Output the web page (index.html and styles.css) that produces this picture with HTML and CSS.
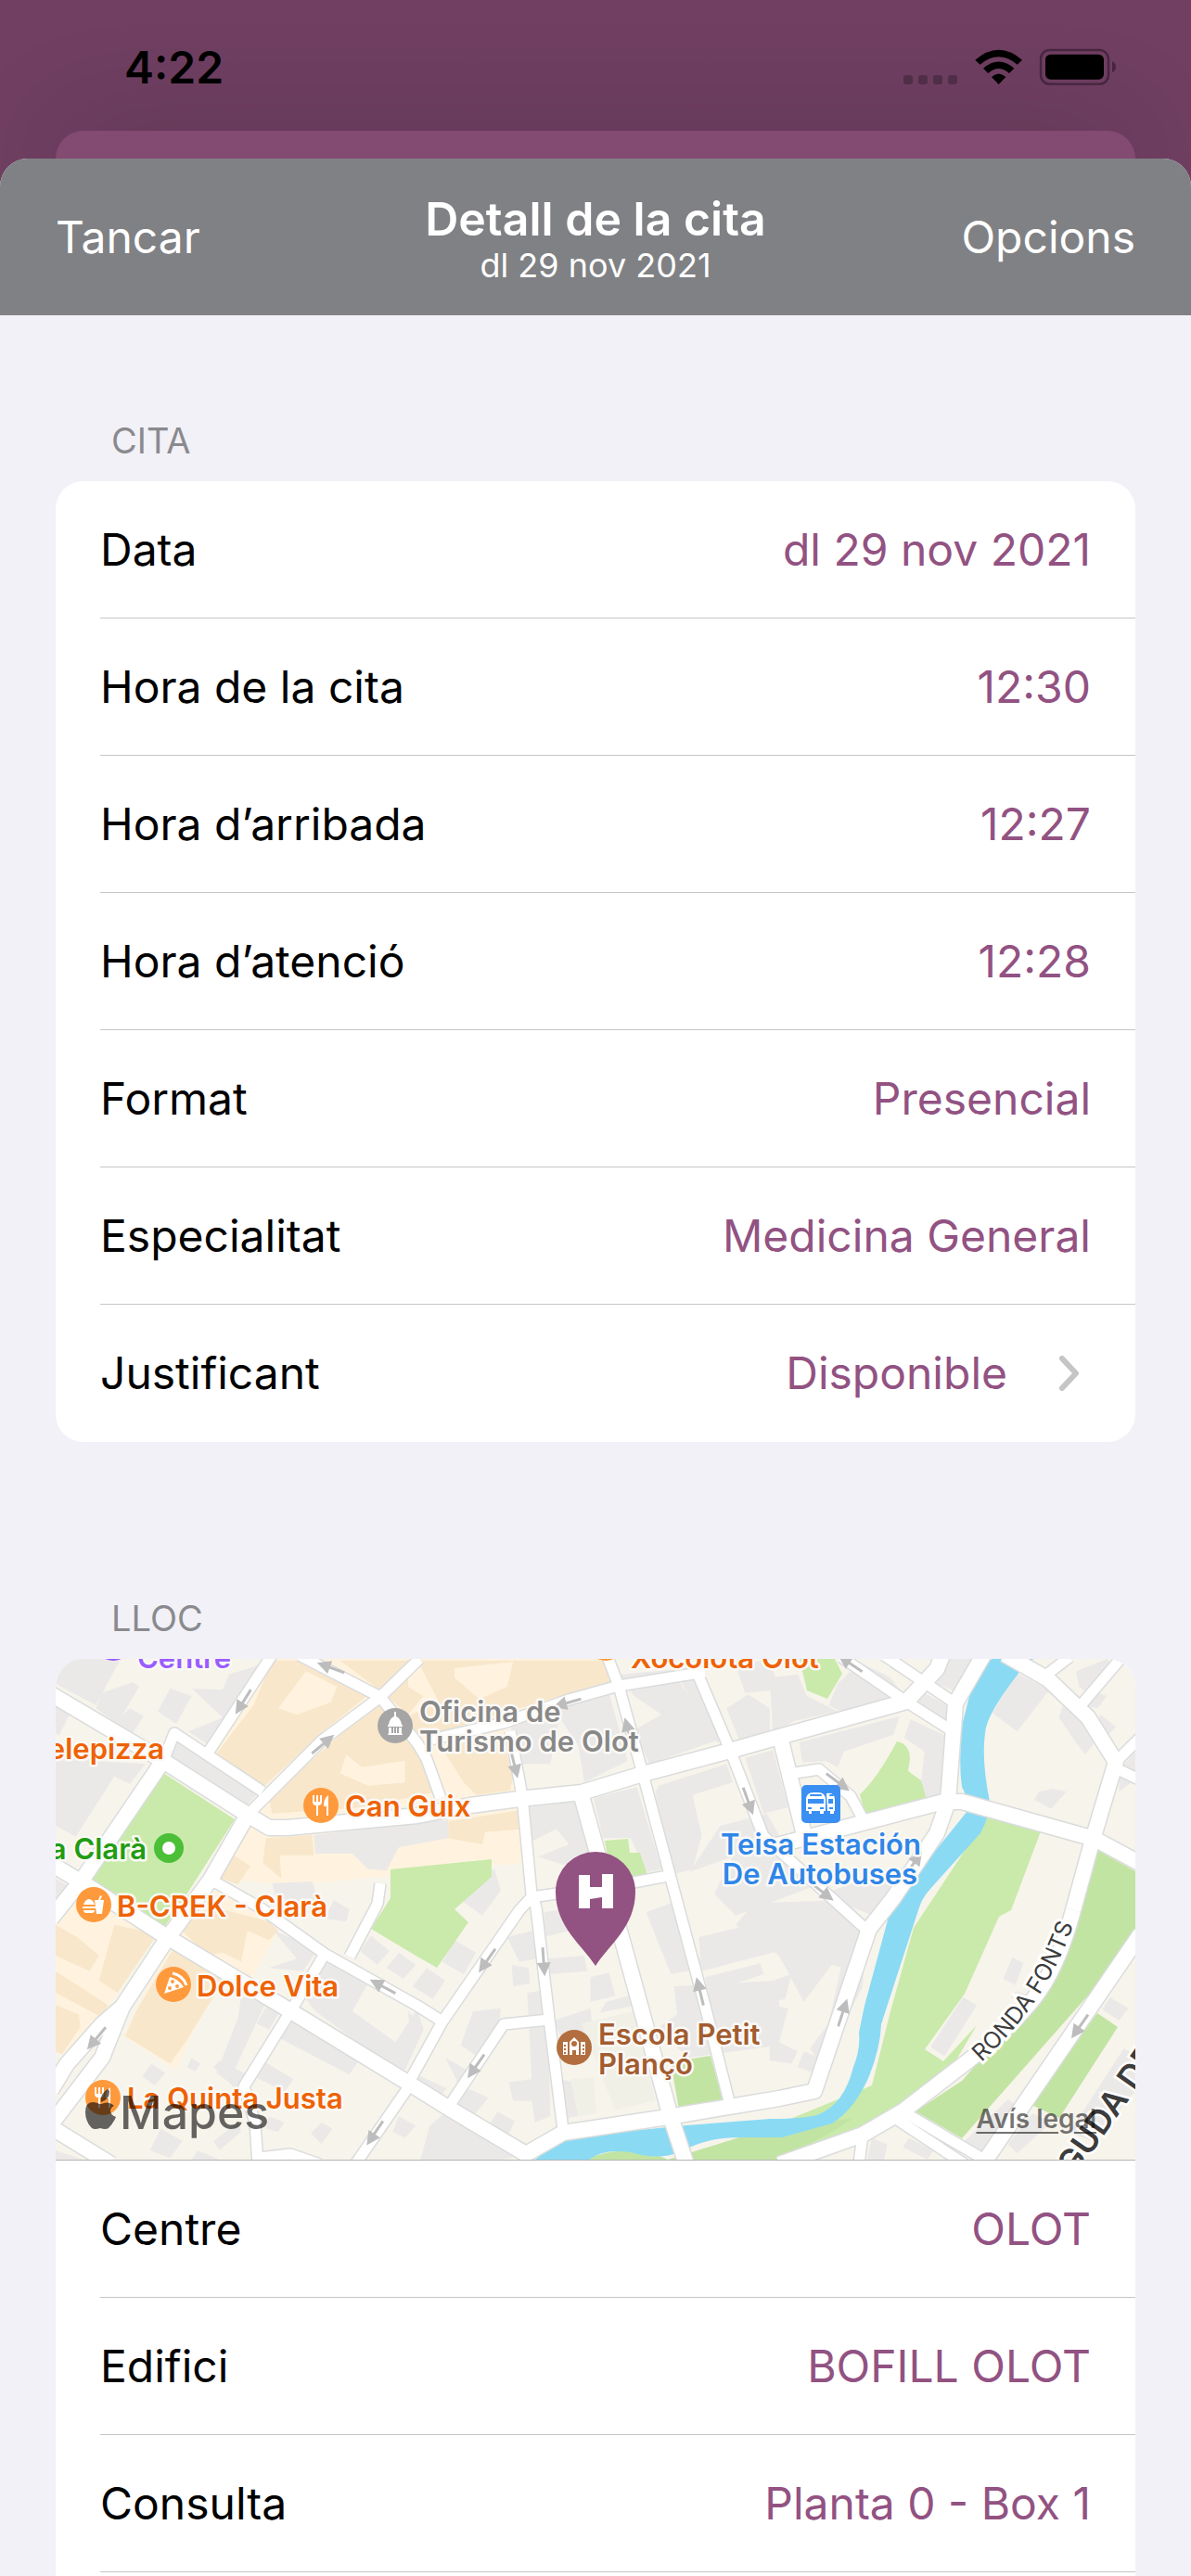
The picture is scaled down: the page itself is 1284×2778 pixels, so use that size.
FILE: index.html
```html
<!DOCTYPE html>
<html lang="ca">
<head>
<meta charset="utf-8">
<meta name="viewport" content="width=device-width, initial-scale=1">
<title>Detall de la cita</title>
<link rel="stylesheet" href="styles.css">
</head>
<body>
<div class="screen">
  <div class="status">
    <span class="clock">4:22</span>
    <svg class="status-icons" width="230" height="42" viewBox="0 0 690 126" aria-hidden="true">
      <g fill="#52304a"><rect x="0" y="90" width="30" height="30" rx="9"/><rect x="48" y="90" width="30" height="30" rx="9"/><rect x="96" y="90" width="30" height="30" rx="9"/><rect x="144" y="90" width="30" height="30" rx="9"/></g>
      <path d="M232 41Q308-25 384 41L368 56Q308 6 248 56ZM258 68Q308 25 358 68L342 84Q308 54 274 84ZM285 96Q308 75 331 96L308 120Z"/>
      <rect x="444" y="9" width="219" height="110" rx="29" fill="none" stroke="#472740" stroke-width="7"/>
      <rect x="459" y="23" width="189" height="81" rx="17"/>
      <path d="M675 45Q687 51 687 63T675 82Z" fill="#472740"/>
    </svg>
  </div>
  <div class="back-card"></div>
  <main class="sheet">
    <header class="bar">
      <button type="button" class="bar-button">Tancar</button>
      <div class="bar-title">
        <h1>Detall de la cita</h1>
        <p>dl 29 nov 2021</p>
      </div>
      <button type="button" class="bar-button bar-button-end">Opcions</button>
    </header>
    <div class="content">
      <section class="group">
        <h2>CITA</h2>
        <dl class="card">
          <div class="row"><dt>Data</dt><dd>dl 29 nov 2021</dd></div>
          <div class="row"><dt>Hora de la cita</dt><dd>12:30</dd></div>
          <div class="row"><dt>Hora d’arribada</dt><dd>12:27</dd></div>
          <div class="row"><dt>Hora d’atenció</dt><dd>12:28</dd></div>
          <div class="row"><dt>Format</dt><dd>Presencial</dd></div>
          <div class="row"><dt>Especialitat</dt><dd>Medicina General</dd></div>
          <div class="row row-last"><dt>Justificant</dt><dd><a class="more" href="#justificant">Disponible<svg width="22" height="38" viewBox="0 0 22 38" aria-hidden="true"><path d="M3 3L18 19L3 35" fill="none" stroke="#c5c5c7" stroke-width="6" stroke-linecap="round" stroke-linejoin="round"/></svg></a></dd></div>
        </dl>
      </section>
      <section class="group">
        <h2>LLOC</h2>
        <div class="card card-place">
          <div class="map">
            <svg class="map-canvas" viewBox="0 0 1164 540" preserveAspectRatio="xMidYMid slice" role="img" aria-label="Mapa d’Olot">
              <defs>
                <g id="roads-l">
                  <path d="M-5 38L113 108L207 168L230 182H250L390 169L447 158L500 151L567 144L633 124L727 99L780 84L917 46L950 11L958-9"/>
                  <path d="M113 114L30 236L-5 280M-5 221L30 242L117 298L247 376L383 459L423 484L507 534L547 511L660 494L780 474L818 466L877 291L903 258L950 188L962 154L970 48L1003-9"/>
                  <path d="M207 168L167 238L120 302L72 375L50 430L-5 502M72 375L50 394L12 437L-5 465M0 508L60 545"/>
                  <path d="M567 148L593 241L613 311L663 494L680 545"/>
                  <path d="M782 88L808 194M770 203L957 154H977L1120 194L1170 221M1023-5L1070 22L1113 63L1143 111L1117 198L1097 271"/>
                  <path d="M1097 271Q1080 335 1053 368T983 434L913 488L870 513L780 545M1170 296L998 547"/>
                </g>
                <g id="roads-s">
                  <path d="M118 105L128 80L223 143M207 168L287 88L350 41L392 0M165 100L233-4M263-4L350 41L390 91L400 108L415 150"/>
                  <path d="M400 88L483 69L553 44L607 29L700 14M595-2L607 29L633 124L667 251L700 374L727 481"/>
                  <path d="M490 78L503 148L513 254L518 268L532 388L547 508M687 4L727 98L763 191L873 291"/>
                  <path d="M797 123L823 119L857 148L872 176M847-2L917 46L967 78M893-4L970 48M1067 18L1093-2M1107 48L1147 1M1143 111L1170 84M1143 118L1170 131"/>
                  <path d="M660 234L623 241L513 257L500 271L417 391L380 458M167 238L220 268L290 318L390 374L417 391M290 318L257 374L203 461L215 500L218 545M317 321L347 264L350 242M383 458L323 545M532 389L483 394L423 484M220 538L253 534L285 545M913 488L1003 541M903 494L980 545M870 513L866 545"/>
                </g>
                <path id="arrow" d="M-14 0H8M4-5L14 0L4 5Z"/>
                <g id="fork"><circle r="19" fill="#ff9a3c"/><path d="M-9-11V-4Q-9 0-5 0V11H-3V0Q1 0 1-4V-11H-1V-4H-3V-11H-5V-4H-7V-11ZM8-11Q3-8 3 1H6V11H8Z" fill="#fff"/></g>
              </defs>
              <rect width="1164" height="540" fill="#f7f4eb"/>

              <g transform="scale(.3333)">
                <!-- old town blocks -->
                <g fill="#fff3df">
                  <path d="M690 0H1790L1800 85L1450 195L1500 440L690 525L650 495L690 430L515 310Z"/>
                  <path d="M620 545L1510 480L1505 660L840 725L800 740L510 705Z"/>
                  <path d="M0 730L330 880L60 1300L0 1270ZM500 720L720 880L620 1060L390 890ZM360 930L520 1060L440 1220L390 1330L220 1220Z"/>
                </g>
                <g fill="#f8e7cb">
                  <path d="M700 5L790 5L1025 105L860 240L665 420L520 305L640 150Z"/>
                  <path d="M920 5H1140V90L1190 120L1140 180L1060 110ZM1170 5H1790L1800 75L1600 130L1400 190L1200 250L1140 240L1150 180L1240 140Z"/>
                  <path d="M690 450L950 220L1050 145L1170 280L1230 430L1000 480L700 500Z"/>
                  <path d="M1250 290L1440 240L1480 380L1470 425L1360 440L1320 400Z"/>
                  <path d="M560 625L630 670L590 730L520 705ZM680 580L830 570L835 635L725 635L730 710L670 660ZM1270 525L1500 490L1515 550L1390 560L1380 600L1270 580Z"/>
                  <path d="M190 860L330 890L200 1080L140 1040ZM0 860L70 900L140 960L110 1010L0 960ZM0 1010L170 1120L150 1160L0 1080ZM0 1120L75 1150L80 1190L20 1280L0 1270ZM400 870L500 800L690 850L720 880L690 910L620 880L600 980L540 950L490 960ZM385 930L550 1040L500 1110L420 1240L370 1310L225 1220L260 1140Z"/>
                </g>
                <g fill="#fff3df">
                  <path d="M810 40L910 90L890 140L780 180L720 160ZM1290 30L1480 10L1460 90L1370 130L1290 60ZM940 310L990 350L1130 330V400L1010 410L920 370Z"/>
                </g>
                <!-- building footprints -->
                <g fill="#ebe9e8">
                  <path d="M20 0H210L130 150L0 80ZM150 110L250 75L270 90L200 210L130 160ZM370 95L440 120L390 210L330 170ZM560 50L690 10L590 160L510 290L430 235L540 190L440 95L540 100ZM240 160L285 185L250 240L190 210ZM0 150L45 180L10 250L0 240ZM0 270L130 330L290 340L240 405L190 380L65 575L0 540ZM370 310L400 265L650 440L610 480L470 390ZM0 710L50 740L0 800Z"/>
                  <path d="M835 570L1140 535L1270 520V580L1110 610L1070 685L1010 680L960 630H840ZM700 725L830 720L850 790L760 830L720 800ZM900 780L950 810L940 850L870 840Z"/>
                  <path d="M1470 210L1790 110L1850 330L1710 400L1690 280L1630 190L1600 340L1500 340ZM1825 50L1990 35L2150 260L1920 340L1870 230L1960 180L1870 120ZM2000 35H2050L2180 250L2140 270ZM1530 480L1690 460L1750 660L1640 665L1560 640L1660 600L1620 550L1540 590ZM1740 450L1880 415L1960 680L1910 690L1860 580L1770 580Z"/>
                  <path d="M2170 160L2240 115L2310 160V240L2210 260ZM2200 20L2310 0L2340 100L2230 110ZM1950 410L2170 340L2190 400L2060 440L2090 570L2060 680L1990 700L1940 430ZM2230 320L2320 295L2370 480L2290 500ZM2150 540L2300 500L2440 740L2200 830L2130 760L2190 640L2050 690Z"/>
                  <path d="M2310 60L2400 50L2430 120L2530 170L2390 200L2320 240ZM2530 80L2600 10L2700 60L2740 115L2540 170L2500 150ZM2700 30L2740 20L2800 60L2790 80ZM2860 0H2970L2920 110L2850 80ZM2800 105L2900 160L2890 205L2790 155ZM2405 270L2730 185L2710 245L2550 300L2530 350L2490 330L2415 335ZM2765 195L2880 250L2865 440L2815 450L2800 400L2810 300L2745 255ZM3105 45L3215 100L3110 235L3030 175ZM3260 145L3370 260L3330 310L3300 270L3245 190ZM3350 100L3400 120L3370 160L3330 150ZM3380 180L3430 220L3400 250L3350 225ZM3180 430L3225 420L3270 430L3220 485L3165 455ZM3440 360L3492 300V390L3440 430ZM3300 40L3400 0L3420 20L3360 130L3310 90ZM2510 750L2650 700L2780 740L2690 850L2570 800Z"/>
                  <path d="M705 880L850 935L800 1010L690 1000L780 970ZM870 970L1010 1050L960 1140L1100 1240L1170 1130L1190 1200L1130 1330L1060 1300L950 1220L840 1140L800 1090ZM1020 895L1080 945L1040 990L985 945ZM1110 950L1165 990L1125 1035L1070 1000ZM600 1090L680 1110L560 1370L520 1340L590 1160ZM760 1150L980 1300L950 1345L730 1230ZM690 1110L730 1130L690 1200L650 1180ZM310 1310L355 1340L320 1380L280 1350ZM440 1290L468 1310L450 1335L425 1320ZM340 1520L410 1560L370 1615L305 1590ZM860 1500L895 1520L860 1570L825 1535ZM690 1480L740 1500L720 1530L680 1520ZM590 1500L600 1530L530 1590L510 1560ZM670 1300L770 1360L740 1400L640 1350ZM530 1300L630 1350L590 1400L510 1320ZM1110 1480L1165 1510L1130 1550L1090 1530ZM0 1590L90 1620H0ZM460 1590L530 1620H440Z"/>
                  <path d="M1290 910L1360 950L1320 1020L1250 980ZM1200 1000L1260 1040L1220 1100L1155 1060ZM1330 720L1420 680L1440 750L1380 830L1310 780ZM1140 1140L1190 1190L1150 1280ZM1350 1140L1440 1130L1430 1220L1370 1290L1310 1250ZM1460 900L1540 880L1555 970L1500 980ZM1475 990L1530 1000L1535 1050L1480 1060ZM1525 1080L1590 1070L1600 1480L1550 1500L1540 1430H1480L1465 1370L1540 1360ZM1310 1380L1400 1420L1350 1480L1290 1440ZM1260 1290L1330 1330L1300 1370ZM1180 1350L1265 1390L1240 1420L1160 1380ZM1270 1460L1350 1500L1500 1610L1440 1620H1180L1210 1510ZM1430 1465L1485 1495L1460 1550L1400 1510Z"/>
                  <path d="M1580 820L1690 800L1740 860L1580 900ZM1590 970L1710 960L1720 1010L1600 1020ZM1730 1030L1790 1015L1810 1090L1730 1110ZM1610 1170L1730 1130L1740 1240L1650 1260ZM1780 1110L1870 1085L1880 1120L1760 1145ZM1630 1360L1680 1370L1690 1480L1630 1490ZM1910 820L1990 790L2100 1000L1990 1020ZM2080 900L2290 850L2320 950L2090 1010ZM2100 1030L2280 985L2290 1020L2110 1080ZM2000 1060L2340 1040L2340 1250L2050 1290L1940 1200L2010 1150ZM2260 790L2560 780L2640 880L2590 1010L2510 990L2420 1110L2340 960L2200 860Z"/>
                  <path d="M2500 1180L2540 1000L2620 900L2610 1060L2480 1320L2440 1260ZM2320 1040L2380 1020L2360 1100L2310 1110ZM2310 1120L2370 1130L2340 1240L2400 1270L2380 1310L2310 1300ZM2420 1270L2470 1290L2450 1340L2400 1320ZM3095 965L3130 985L3105 1055L3065 1035ZM2935 1095L2980 1120L2875 1285L2830 1255ZM3410 1095L3470 1130L3440 1170L3385 1135ZM3110 1075L3140 1085L3125 1105L3090 1095ZM3455 1260L3492 1280V1400L3350 1560L3280 1530ZM3080 1425L3120 1450L2990 1610L2930 1570ZM3160 1470L3220 1500L3110 1600L3080 1570ZM2640 1550L2690 1570L2680 1620H2625ZM2760 1550L2840 1590L2820 1620L2740 1580Z"/>
                </g>
                <path fill="#f0f0e7" d="M1700 1180L1870 1140L1940 1430L1810 1460ZM1665 1360L1740 1355L1750 1470L1690 1480Z"/>
              </g>

              <g fill="#c9eaaa">
                <path d="M113 121L193 173L143 251L118 288L40 238Z"/>
                <path d="M361 227L470 216V235L430 270L445 284L411 333L390 321L340 291L361 258Z"/>
                <path d="M592 196L617 194L619 209H630L638 233L600 240Z"/>
                <path d="M802 0H840L848 16L832 43L810 34Z"/>
                <path d="M907 89Q921 92 921 108L919 121L933 131L939 151L873 169L867 146Q885 130 907 89Z"/>
                <path d="M1005 169L1062 186L1030 271L1017 278L980 361L937 421L957 434L993 395L970 434L983 440L913 488L870 513L770 540V505L880 460L900 380L925 290Z"/>
                <path d="M44 425L5 485L0 492V482Z"/>
              </g>
              <g fill="#c2e4a3">
                <path d="M1123 206L1164 229V305L977 517L927 488L977 455L1053 368L1087 311Z"/>
                <path d="M1123 382L1145 397L1082 495L1050 480Z"/>
                <path d="M663 435L706 428L720 479L672 486Z"/>
                <path d="M570 540Q620 520 660 540L740 515L860 495L837 510L780 540Z"/>
              </g>
              <path fill="#8adaf4" d="M1010 0H1054L1050 4L1040 13Q1003 60 1002 80Q998 110 1007 154Q1006 172 997 188L943 248Q934 258 931 268L890 394Q889 420 877 450Q862 485 837 501L783 516H740Q710 516 690 524L672 532Q650 541 620 532Q590 528 575 540H517Q540 520 570 514L680 503L770 496Q810 496 823 491Q850 480 860 440Q868 420 866 403L872 374L898 278Q900 264 910 252L937 221L983 164Q984 150 977 138Q973 110 978 68L990 21Q997 6 1010 0Z"/>
              <g class="road-edge"><use href="#roads-s" class="road-small-edge"/><use href="#roads-l" class="road-large-edge"/></g>
              <g class="road-fill"><use href="#roads-s" class="road-small"/><use href="#roads-l" class="road-large"/></g>
              <g class="arrows">
                <use href="#arrow" transform="translate(203 45) rotate(122)"/><use href="#arrow" transform="translate(298 10) rotate(200)"/>
                <use href="#arrow" transform="translate(287 93) rotate(-40)"/><use href="#arrow" transform="translate(494 112) rotate(76)"/>
                <use href="#arrow" transform="translate(618 80) rotate(-105)"/><use href="#arrow" transform="translate(746 152) rotate(70)"/>
                <use href="#arrow" transform="translate(858 6) rotate(214)"/><use href="#arrow" transform="translate(842 132) rotate(37)"/>
                <use href="#arrow" transform="translate(825 250) rotate(38)"/><use href="#arrow" transform="translate(924 222) rotate(-55)"/>
                <use href="#arrow" transform="translate(45 408) rotate(130)"/><use href="#arrow" transform="translate(354 354) rotate(208)"/>
                <use href="#arrow" transform="translate(345 510) rotate(124)"/><use href="#arrow" transform="translate(466 324) rotate(125)"/>
                <use href="#arrow" transform="translate(526 325) rotate(86)"/><use href="#arrow" transform="translate(454 438) rotate(125)"/>
                <use href="#arrow" transform="translate(695 360) rotate(-104)"/><use href="#arrow" transform="translate(848 383) rotate(-72)"/>
                <use href="#arrow" transform="translate(1105 395) rotate(125)"/><use href="#arrow" transform="translate(553 47) rotate(164)"/>
              </g>

              <circle cx="62" cy="-17" r="19" fill="#9a5cff"/>
              <circle cx="593" cy="-17" r="19" fill="#ff9a3c"/>
              <g transform="translate(366 72)"><circle r="19" fill="#a5a5a5"/><path d="M-1-15H1V-10Q6-8 7-1H8V1H-8V-1H-7Q-6-8-1-10ZM-7 2H-4V8H-2V2H-1V8H1V2H2V8H4V2H7V8L8 10H-8L-7 8Z" fill="#fff"/></g>
              <use href="#fork" transform="translate(286 158)"/>
              <circle cx="122" cy="204" r="16" fill="#4bbf38"/><circle cx="122" cy="204" r="7" fill="#fff"/>
              <g transform="translate(41 265)"><circle r="19" fill="#ff9a3c"/><path d="M-11 0Q-9-6-5-6T1 0ZM-12 2H2V4H-12ZM-11 6H1Q1 9-2 9H-8Q-11 9-11 6ZM1-5H5L7-10L9-9L7-5H11L9 10H3Z" fill="#fff"/></g>
              <g transform="translate(127 351)"><circle r="19" fill="#ff9a3c"/><path d="M-10 10L-4-8Q7-5 11 3Z" fill="#fff"/><path d="M-1-12Q10-10 14 1" fill="none" stroke="#fff" stroke-width="3"/><circle cx="-1" cy="-3" r="2" fill="#ff9a3c"/><circle cx="4" cy="2" r="2" fill="#ff9a3c"/><circle cx="-4" cy="4" r="2" fill="#ff9a3c"/></g>
              <use href="#fork" transform="translate(51 473)"/>
              <g transform="translate(559 419)"><circle r="19" fill="#b26e3e"/><path d="M-12-6H-7V8H-12ZM7-6H12V8H7ZM-5 8V-6L0-11L5-6V8H2V3H-2V8Z" fill="#fff"/><circle cy="-4" r="3" fill="#b26e3e"/><path d="M-10-3V7M10-3V7" stroke="#b26e3e" stroke-width="2" stroke-dasharray="2 2"/></g>
              <g transform="translate(804 136)"><rect width="42" height="41" rx="5" fill="#3a8ff2"/><path d="M5 28V16Q5 8 13 8H18Q26 8 26 16V28H24V31H20V28H11V31H8V28ZM27 9Q36 7 36 16V28H35V31H31V28H28Z" fill="#fff"/><path d="M10 11H21M31 11H34" stroke="#3a8ff2" stroke-width="2" stroke-linecap="round"/><path d="M7 15H24V20H7ZM29 15H34V20H29ZM7 24H11V26H7ZM20 24H24V26H20ZM30 24H34V26H30Z" fill="#3a8ff2"/></g>

              <g class="labels">
                <g fill="#9a5cff"><text x="88" y="10">Centre</text></g>
                <g fill="#ee6205">
                  <text x="620" y="10">Xocolota Olot</text>
                  <text x="117" y="108" text-anchor="end">Telepizza</text>
                  <text x="312" y="170">Can Guix</text>
                  <text x="66" y="278">B-CREK - Clarà</text>
                  <text x="152" y="364">Dolce Vita</text>
                  <text x="77" y="485">La Quinta Justa</text>
                </g>
                <g fill="#888888"><text x="392" y="68">Oficina de</text><text x="392" y="100">Turismo de Olot</text></g>
                <g fill="#1f9c12"><text x="98" y="216" text-anchor="end">Plaça Clarà</text></g>
                <g fill="#2f86e8" text-anchor="middle"><text x="825" y="211">Teisa Estación</text><text x="824" y="243">De Autobuses</text></g>
                <g fill="#a25c30"><text x="585" y="416">Escola Petit</text><text x="585" y="448">Plançó</text></g>
              </g>
              <path id="ronda" d="M998 435Q1076 364 1103 268" fill="none"/>
              <text class="street"><textPath href="#ronda">RONDA FONTS</textPath></text>
              <text class="avenue" transform="translate(1084 580) rotate(-55)">AGUDA DE</text>

              <g transform="translate(582 269)">
                <path d="M0 62C-14 40-43 20-43-18A43 43 0 0 1 43-18C43 20 14 40 0 62Z" fill="#925282"/>
                <path d="M-18-36H-6V-23H7V-37H19V0H7V-12L-6-10V0H-18Z" fill="#fff"/>
              </g>
              <path class="apple" transform="translate(32 465)" d="M26 2C25-4 21 1 18 5Q16 10 17 13Q26 10 26 2ZM31 17Q26 12 20 14Q16 16 13 14Q0 10 0 24Q0 34 7 41Q10 43 16 41Q22 43 25 41Q30 36 33 29Q27 27 27 22Q28 18 31 17Z"/>
              <text class="brand" x="69" y="507">Mapes</text>
            </svg>
            <a class="legal" href="#legal">Avís legal</a>
          </div>
          <dl class="rows">
            <div class="row"><dt>Centre</dt><dd>OLOT</dd></div>
            <div class="row"><dt>Edifici</dt><dd>BOFILL OLOT</dd></div>
            <div class="row"><dt>Consulta</dt><dd>Planta 0 - Box 1</dd></div>
          </dl>
        </div>
      </section>
    </div>
  </main>
</div>
</body>
</html>
```
FILE: styles.css
```css
* { box-sizing: border-box; }

body, h1, h2, p, dl, dd { margin: 0; }

body {
  font-family: Inter, "Liberation Sans", sans-serif;
  font-size: 48px;
  line-height: 60px;
  color: #000;
  background: #703f62;
}

.screen {
  display: flex;
  flex-direction: column;
  height: 100vh;
  overflow: hidden;
}

.status {
  display: flex;
  flex: none;
  align-items: center;
  justify-content: space-between;
  height: 141px;
  padding: 4px 80px 0 134px;
}

.clock { font-weight: 600; }

.status-icons { margin-bottom: 2px; }

.back-card {
  flex: none;
  height: 60px;
  margin: 0 60px -30px;
  border-radius: 30px 30px 0 0;
  background: #834a72;
  box-shadow: 0 0 120px rgba(0, 0, 0, 0.2);
}

.sheet {
  display: flex;
  flex: 1;
  flex-direction: column;
  min-height: 0;
  overflow: hidden;
  border-radius: 30px 30px 0 0;
  background: #f2f1f7;
}

.bar {
  display: grid;
  grid-template-columns: 1fr auto 1fr;
  flex: none;
  align-items: center;
  height: 169px;
  padding: 0 60px;
  color: #fff;
  background: #808184;
}

.bar-button {
  justify-self: start;
  padding: 0;
  border: 0;
  font: inherit;
  color: inherit;
  background: none;
}

.bar-button-end { justify-self: end; }

.bar-title { text-align: center; }

.bar-title h1 {
  font-size: 50px;
  font-weight: 600;
  line-height: 60px;
}

.bar-title p {
  font-size: 36px;
  line-height: 40px;
}

.content {
  flex: 1;
  min-height: 0;
  overflow: hidden;
  padding: 111px 60px 0;
}

.group { margin-bottom: 166px; }

.group h2 {
  padding: 0 60px 20px;
  font-size: 38px;
  font-weight: 400;
  line-height: 48px;
  color: #8a8a8e;
}

.card {
  overflow: hidden;
  border-radius: 30px;
  background: #fff;
}

.card-place { padding-bottom: 60px; }

.row {
  display: flex;
  align-items: center;
  justify-content: space-between;
  height: 148px;
  margin-left: 48px;
  padding-right: 48px;
  border-bottom: 1px solid #c6c6c8;
}

.row-last { border-bottom: 0; }

.row dd { color: #925282; }

.more {
  display: flex;
  gap: 56px;
  align-items: center;
  padding-right: 12px;
  color: inherit;
  text-decoration: none;
}

.map {
  position: relative;
  height: 541px;
  border-bottom: 1px solid #b5b5b5;
}

.map-canvas {
  display: block;
  width: 100%;
  height: 540px;
}

.road-edge { fill: none; stroke: #dadcdc; stroke-linejoin: round; }
.road-fill { fill: none; stroke: #fff; stroke-linejoin: round; }
.road-small-edge { stroke-width: 14px; }
.road-large-edge { stroke-width: 19px; }
.road-small { stroke-width: 11px; }
.road-large { stroke-width: 16px; }

.arrows { fill: #bdbdbd; stroke: #bdbdbd; stroke-width: 3px; }

.labels text {
  font-size: 31px;
  font-weight: 600;
  stroke: #fbf9f6;
  stroke-width: 5px;
  stroke-linejoin: round;
  paint-order: stroke;
}

.street {
  font-size: 25px;
  fill: #3c3c3c;
  stroke: #fff;
  stroke-width: 6px;
  paint-order: stroke;
}

.avenue {
  font-size: 36px;
  font-weight: 600;
  fill: #3c3c3c;
  stroke: #fff;
  stroke-width: 5px;
  paint-order: stroke;
}

.apple, .brand { fill: #000; fill-opacity: 0.6; }

.brand { font-size: 50px; font-weight: 500; }

.legal {
  position: absolute;
  right: 42px;
  bottom: 26px;
  font-size: 28px;
  font-weight: 600;
  line-height: 36px;
  color: rgba(0, 0, 0, 0.55);
  text-underline-offset: 4px;
}
```
